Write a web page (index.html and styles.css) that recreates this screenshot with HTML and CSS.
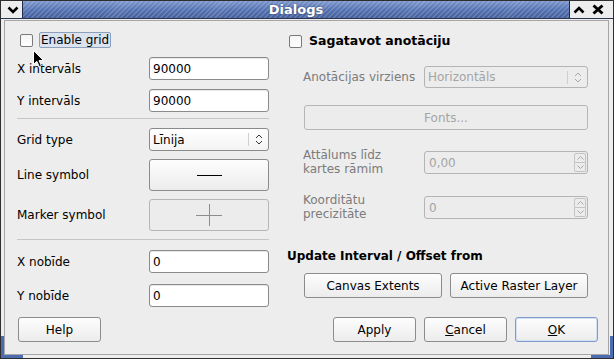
FILE: index.html
```html
<!DOCTYPE html>
<html lang="lv">
<head>
  <meta charset="UTF-8">
  <title>Dialogs</title>
  <link rel="stylesheet" href="styles.css">
</head>
<body>
  <div class="window">
    <div class="titlebar">
      <div class="tb-menu">
        <svg width="12" height="8" viewBox="0 0 12 8"><path d="M1.5 1.5 L6 6 L10.5 1.5" fill="none" stroke="#000" stroke-width="2.6"/></svg>
      </div>
      <div class="tb-title">Dialogs</div>
      <div class="tb-controls">
        <svg width="12" height="8" viewBox="0 0 12 8"><path d="M1.5 6.5 L6 2 L10.5 6.5" fill="none" stroke="#000" stroke-width="2.6"/></svg>
        <svg width="12" height="11" viewBox="0 0 12 11"><path d="M1.5 1.5 L10.5 9.5 M10.5 1.5 L1.5 9.5" fill="none" stroke="#000" stroke-width="3"/></svg>
      </div>
    </div>

    <div class="frame">
      <div class="client">
        <div class="main">
          <!-- grid settings -->
          <div class="col-left">
            <div class="check-row">
              <span class="checkbox"></span>
              <span class="focus-label">Enable grid</span>
            </div>
            <div class="field-row row-x">
              <span>X intervāls</span>
              <input class="edit" type="text" value="90000">
            </div>
            <div class="field-row row-y">
              <span>Y intervāls</span>
              <input class="edit" type="text" value="90000">
            </div>
            <div class="sep sep-1"></div>
            <div class="field-row">
              <span>Grid type</span>
              <div class="combo">
                <span class="combo-text">Līnija</span>
                <span class="combo-arrow">
                  <svg width="8" height="11" viewBox="0 0 8 11"><path d="M1 4 L4 1 L7 4 M1 7 L4 10 L7 7" fill="none" stroke="#333" stroke-width="1"/></svg>
                </span>
              </div>
            </div>
            <div class="field-row tall row-line">
              <span>Line symbol</span>
              <button class="btn symbol-btn"><span class="line-sample"></span></button>
            </div>
            <div class="field-row tall row-marker">
              <span>Marker symbol</span>
              <button class="btn symbol-btn disabled">
                <svg width="26" height="22" viewBox="0 0 26 22"><path d="M0 11.5 H26 M13.5 0 V22" stroke="#8d8d8d" stroke-width="1"/></svg>
              </button>
            </div>
            <div class="sep sep-2"></div>
            <div class="field-row row-xo">
              <span>X nobīde</span>
              <input class="edit" type="text" value="0">
            </div>
            <div class="field-row row-yo">
              <span>Y nobīde</span>
              <input class="edit" type="text" value="0">
            </div>
          </div>

          <!-- annotation settings -->
          <div class="col-right">
            <div class="check-row">
              <span class="checkbox"></span>
              <span class="check-bold">Sagatavot anotāciju</span>
            </div>
            <div class="ann-row row-dir">
              <span>Anotācijas virziens</span>
              <div class="combo disabled">
                <span class="combo-text">Horizontāls</span>
                <span class="combo-arrow">
                  <svg width="8" height="11" viewBox="0 0 8 11"><path d="M1 4 L4 1 L7 4 M1 7 L4 10 L7 7" fill="none" stroke="#a8a8a8" stroke-width="1"/></svg>
                </span>
              </div>
            </div>
            <button class="btn disabled fonts-btn">Fonts...</button>
            <div class="ann-row row-dist">
              <span class="two-line">Attālums līdz<br>kartes rāmim</span>
              <div class="spin">
                <span class="spin-text">0,00</span>
                <span class="spin-arrows">
                  <span class="spin-up"><svg width="7" height="4" viewBox="0 0 7 4"><path d="M0.5 3.5 L3.5 0.5 L6.5 3.5" fill="none" stroke="#a8a8a8"/></svg></span>
                  <span class="spin-down"><svg width="7" height="4" viewBox="0 0 7 4"><path d="M0.5 0.5 L3.5 3.5 L6.5 0.5" fill="none" stroke="#a8a8a8"/></svg></span>
                </span>
              </div>
            </div>
            <div class="ann-row row-prec">
              <span class="two-line">Koorditātu<br>precizitāte</span>
              <div class="spin">
                <span class="spin-text">0</span>
                <span class="spin-arrows">
                  <span class="spin-up"><svg width="7" height="4" viewBox="0 0 7 4"><path d="M0.5 3.5 L3.5 0.5 L6.5 3.5" fill="none" stroke="#a8a8a8"/></svg></span>
                  <span class="spin-down"><svg width="7" height="4" viewBox="0 0 7 4"><path d="M0.5 0.5 L3.5 3.5 L6.5 0.5" fill="none" stroke="#a8a8a8"/></svg></span>
                </span>
              </div>
            </div>
            <div class="section-title">Update Interval / Offset from</div>
            <div class="update-btns">
              <button class="btn">Canvas Extents</button>
              <button class="btn">Active Raster Layer</button>
            </div>
          </div>
        </div>

        <div class="footer">
          <button class="btn help-btn">Help</button>
          <div class="footer-right">
            <button class="btn">Apply</button>
            <button class="btn"><u>C</u>ancel</button>
            <button class="btn default-btn"><u>O</u>K</button>
          </div>
        </div>
      </div>
    </div>

    <svg class="cursor" width="12" height="18" viewBox="0 0 12 18">
      <path d="M0.5 0.5 L0.5 14.5 L3.8 11.3 L6.3 16.8 L8.4 15.8 L6 10.6 L10.6 10.6 Z" fill="#000" stroke="#fff" stroke-width="1"/>
    </svg>
  </div>
</body>
</html>
```

FILE: styles.css
```css
body {
  margin: 0;
  background-color: #ffffff;
  font-family: 'DejaVu Sans', sans-serif;
  font-size: 12px;
  color: #000;
}
.window {
  position: relative;
  width: 614px;
  height: 359px;
  box-sizing: border-box;
  border: 1px solid #2e2e2e;
  background-color: #ededed;
  display: flex;
  flex-direction: column;
}
/* Title bar */
.titlebar {
  height: 18px;
  box-sizing: border-box;
  border-bottom: 1px solid #2a3550;
  display: flex;
}
.tb-menu {
  width: 21px;
  display: flex;
  align-items: center;
  justify-content: center;
  padding-left: 2px;
  box-sizing: border-box;
}
.tb-title {
  flex: 1;
  border-left: 1px solid #1f2c4d;
  border-right: 1px solid #1f2c4d;
  background:
    repeating-linear-gradient(135deg, rgba(255, 255, 255, 0.16) 0 1.5px, rgba(255, 255, 255, 0) 1.5px 3.5px),
    linear-gradient(#7d97cd, #5573b3 50%, #45609c);
  color: #fff;
  font-weight: bold;
  font-size: 13px;
  line-height: 17px;
  text-align: center;
  text-shadow: 0 0 2px #2b3d6b;
}
.tb-controls {
  width: 43px;
  display: flex;
  align-items: center;
  gap: 7px;
  padding-left: 3px;
  box-sizing: border-box;
}
/* Frame */
.frame {
  position: relative;
  flex: 1;
  display: flex;
  padding: 1px 4px 3px 3px;
}
.frame::before,
.frame::after {
  content: '';
  position: absolute;
  bottom: 0;
  width: 19px;
  height: 19px;
  border-bottom: 3px solid #4d6bb0;
}
.frame::before {
  left: 0;
  border-left: 3px solid #4d6bb0;
}
.frame::after {
  right: 0;
  border-right: 3px solid #4d6bb0;
}
.client {
  flex: 1;
  border: 1px solid #a6a6a6;
  padding: 11px 10px 0 12px;
  display: flex;
  flex-direction: column;
}
.main {
  display: grid;
  grid-template-columns: 252px 301px;
  column-gap: 18px;
  align-items: start;
}
.col-left,
.col-right {
  display: flex;
  flex-direction: column;
}
/* Checkboxes */
.check-row {
  height: 16px;
  display: flex;
  align-items: center;
}
.checkbox {
  width: 11px;
  height: 11px;
  border: 1px solid #7a7a7a;
  border-radius: 2px;
  background: linear-gradient(#f4f4f4, #ffffff);
  margin-left: 3px;
}
.focus-label {
  margin-left: 6px;
  padding: 0 1px;
  line-height: 14px;
  border: 1px solid #8c9fbd;
  border-radius: 2px;
  background-color: #dbe3ef;
}
.col-right .checkbox {
  margin-left: 2px;
  margin-top: 2px;
}
.check-bold {
  margin-left: 7px;
  font-weight: bold;
  font-size: 12.5px;
}
/* Left form rows */
.field-row {
  display: grid;
  grid-template-columns: 132px 120px;
  align-items: center;
  height: 23px;
}
.field-row.tall {
  height: 32px;
}
.row-x { margin-top: 9px; }
.row-y { margin-top: 9px; }
.sep {
  border-top: 1px solid #c6c6c6;
}
.sep-1 { margin: 6px 0 9px; }
.row-line { margin-top: 8px; }
.row-marker { margin-top: 8px; }
.sep-2 { margin: 8px 0 10px; }
.row-yo { margin-top: 11px; }
.edit {
  width: 120px;
  height: 23px;
  box-sizing: border-box;
  border: 1px solid #8a8a8a;
  border-radius: 3px;
  background-color: #fff;
  box-shadow: inset 0 1px 1px rgba(0, 0, 0, 0.1);
  font: inherit;
  color: #000;
  padding: 0 3px;
  margin: 0;
  outline: none;
}
/* Combo boxes */
.combo {
  height: 23px;
  box-sizing: border-box;
  border: 1px solid #8a8a8a;
  border-radius: 3px;
  background: linear-gradient(#ffffff, #f3f3f3);
  display: flex;
  align-items: center;
}
.combo-text {
  flex: 1;
  padding-left: 3px;
}
.combo-arrow {
  width: 18px;
  height: 13px;
  border-left: 1px solid #cfcfcf;
  display: flex;
  align-items: center;
  justify-content: center;
  padding-left: 1px;
}
.combo.disabled {
  background: #ececec;
  border-color: #b4b4b4;
  color: #a4a4a4;
}
/* Buttons */
.btn {
  height: 25px;
  box-sizing: border-box;
  border: 1px solid #8c8c8c;
  border-radius: 3px;
  background: linear-gradient(#fdfdfd, #ececec);
  font: inherit;
  color: #000;
  padding: 0;
  margin: 0;
  display: flex;
  align-items: center;
  justify-content: center;
}
.btn.disabled {
  border-color: #b6b6b6;
  background: #ececec;
  color: #a4a4a4;
}
.symbol-btn {
  width: 120px;
  height: 32px;
}
.line-sample {
  width: 25px;
  border-top: 1px solid #000;
}
/* Right column rows */
.ann-row {
  display: grid;
  grid-template-columns: 121px 164px;
  align-items: center;
  height: 23px;
  padding-left: 16px;
  color: #7b7b7b;
}
.row-dir {
  margin-top: 18px;
  height: 22px;
}
.row-dir .combo {
  height: 22px;
}
.fonts-btn {
  margin: 17px 0 0 17px;
  width: 284px;
}
.row-dist { margin-top: 19px; }
.row-prec { margin-top: 22px; }
.two-line {
  line-height: 13.5px;
}
.spin {
  height: 23px;
  box-sizing: border-box;
  border: 1px solid #b4b4b4;
  border-radius: 3px;
  background: #ececec;
  color: #a4a4a4;
  display: flex;
  align-items: center;
}
.spin-text {
  flex: 1;
  padding-left: 4px;
}
.spin-arrows {
  width: 12px;
  align-self: stretch;
  display: flex;
  flex-direction: column;
  padding: 1px 1px 1px 0;
}
.spin-up,
.spin-down {
  flex: 1;
  border: 1px solid #c4c4c4;
  display: flex;
  align-items: center;
  justify-content: center;
}
.spin-up {
  border-radius: 2px 2px 0 0;
}
.spin-down {
  border-top: none;
  border-radius: 0 0 2px 2px;
}
.section-title {
  margin-top: 31px;
  font-weight: bold;
  line-height: 16px;
}
.update-btns {
  margin: 9px 0 0 17px;
  display: flex;
  gap: 8px;
}
.update-btns .btn {
  width: 138px;
}
/* Footer */
.footer {
  margin-top: 10px;
  display: flex;
  justify-content: space-between;
}
.footer .btn {
  width: 83px;
}
.help-btn {
  margin-left: 1px;
}
.footer-right {
  display: flex;
  gap: 8px;
}
.default-btn {
  border-color: #7f9bcb;
  box-shadow: inset 0 0 0 1px #d3dff2;
}
.cursor {
  position: absolute;
  left: 32px;
  top: 49px;
}
```
